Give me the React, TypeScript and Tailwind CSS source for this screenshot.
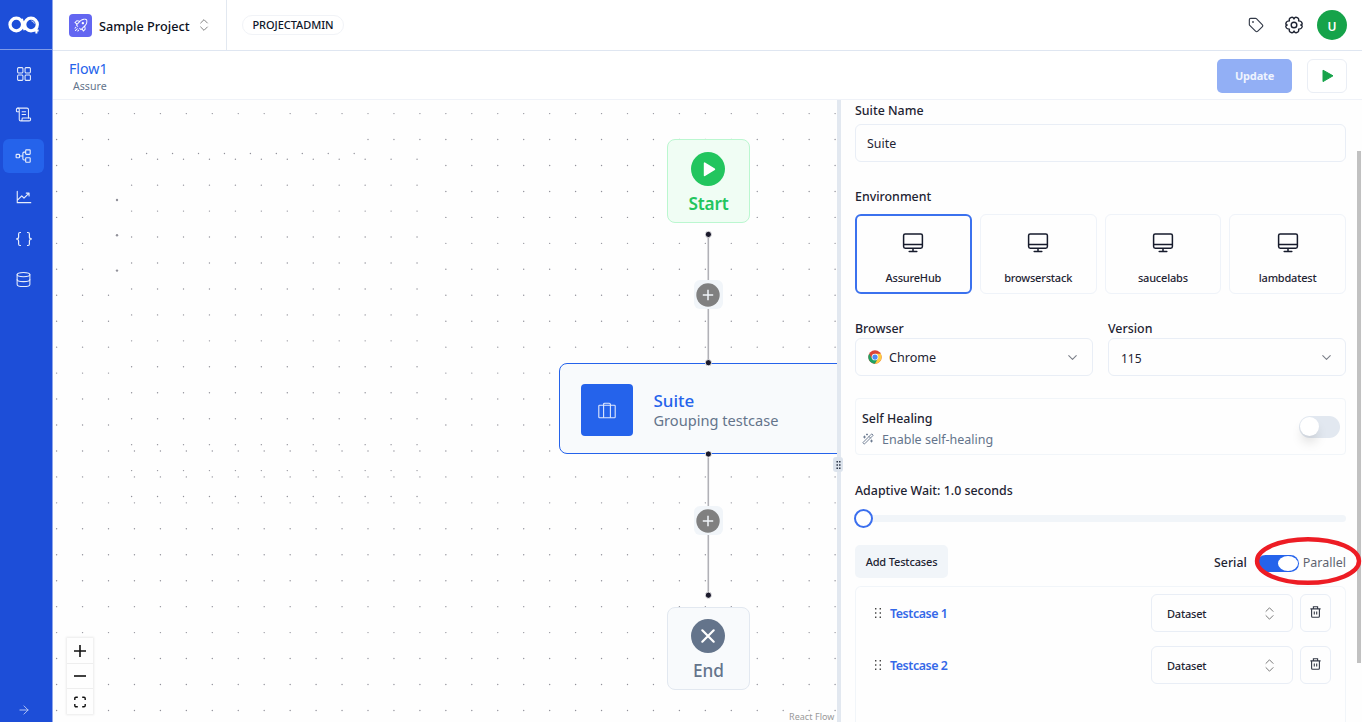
import React from "react";
import { ScrollText, ChevronsUpDown, ChevronDown, Tag, Database, ArrowRight, WandSparkles } from "lucide-react";
import { RxDashboard, RxRocket } from "react-icons/rx";
import { PiTreeStructure, PiChartLineUp } from "react-icons/pi";

const STEP = 25.95;

function buildDots() {
  const dots: [number, number, number][] = [];
  for (let j = 0; j < 24; j++) {
    for (let i = 0; i < 31; i++) {
      const inner = i >= 3 && i <= 14 && j >= 1 && j <= 12 && !(j === 1 && i >= 12);
      const notch = i === 2 && j >= 3 && j <= 6;
      if (!inner && !notch) dots.push([3.6 + STEP * i, 13.6 + STEP * j, 0.7]);
    }
  }
  for (let j = 0; j < 14; j++) {
    for (let i = 0; i < 12; i++) dots.push([78.6 + STEP * i, 59.2 + STEP * j, 0.7]);
  }
  for (let i = 0; i < 9; i++) dots.push([93.6 + STEP * i, 53.5, 0.7]);
  dots.push([64, 100, 1.2], [64, 135.3, 1.2], [64, 170.6, 1.2]);
  return dots;
}

const DOTS = buildDots();

function NavItem({ active, children }: { active?: boolean; children: React.ReactNode }) {
  return (
    <div
      className={
        active
          ? "flex h-[34px] w-[41px] items-center justify-center rounded-md bg-[#2563eb]"
          : "flex h-[34px] w-[41px] items-center justify-center"
      }
    >
      {children}
    </div>
  );
}

function Sidebar() {
  return (
    <aside className="flex w-[53px] shrink-0 flex-col border-r border-[#8ea6ec] bg-[#1d4ed8] text-[#e6ecfb]">
      <div className="flex h-[50px] shrink-0 items-center border-b-[1.5px] border-[#7f9ae8] pl-[8px]">
        <svg width="32" height="20" viewBox="0 0 32 20" fill="none" stroke="#fff" strokeWidth="3.3">
          <circle cx="8.3" cy="9.5" r="6.3" />
          <circle cx="23" cy="9.5" r="6.3" />
          <path d="M13.4 4L17 15" strokeWidth="3" />
          <path d="M25.4 15.6H30.6M28.4 12.6V18.4" strokeWidth="2" />
          <path d="M23.4 5.8a3.6 3.6 0 0 1 3 2.8" strokeWidth="0.8" />
        </svg>
      </div>
      <nav className="flex flex-1 flex-col gap-[7.3px] pl-[3px] pt-[6.5px]">
        <NavItem><RxDashboard size={16} /></NavItem>
        <NavItem><ScrollText size={17} strokeWidth={1.5} /></NavItem>
        <NavItem active><PiTreeStructure size={18} /></NavItem>
        <NavItem><PiChartLineUp size={18} /></NavItem>
        <NavItem>
          <svg width="18" height="16" viewBox="0 0 18 16" fill="none" stroke="currentColor" strokeWidth="1.2">
            <path d="M6 1.5H5Q3.6 1.5 3.6 3V6Q3.6 8 1 8Q3.6 8 3.6 10V13Q3.6 14.5 5 14.5H6M12 1.5H13Q14.4 1.5 14.4 3V6Q14.4 8 17 8Q14.4 8 14.4 10V13Q14.4 14.5 13 14.5H12" />
          </svg>
        </NavItem>
        <NavItem><Database size={17} strokeWidth={1.5} /></NavItem>
      </nav>
      <div className="flex h-6 items-center pl-[17px] text-[#b9c9f5]"><ArrowRight size={14} strokeWidth={1.6} /></div>
    </aside>
  );
}

function GearIcon() {
  return (
    <svg width="18" height="18" viewBox="0 0 18 18" fill="none" stroke="#1f2433" strokeWidth="1.4" strokeLinejoin="round">
      <path d="M9 2.9C9.6 1.6 10.6 1 11.6 1.4L13 2.2C13.9 2.8 13.9 3.7 13.6 4.9C14.8 5 16 5.1 16.5 6L17.1 7.4C17.4 8.4 16.6 8.8 15.8 9C16.6 9.3 17.4 9.7 17.1 10.7L16.5 12C16 12.9 14.8 13 13.6 13.1C13.9 14.3 13.9 15.2 13 15.8L11.6 16.6C10.6 17 9.6 16.4 9 15.1C8.4 16.4 7.4 17 6.4 16.6L5 15.8C4.1 15.2 4.1 14.3 4.4 13.1C3.2 13 2 12.9 1.5 12L0.9 10.7C0.6 9.7 1.4 9.3 2.2 9C1.4 8.8 0.6 8.4 0.9 7.4L1.5 6C2 5.1 3.2 5 4.4 4.9C4.1 3.7 4.1 2.8 5 2.2L6.4 1.4C7.4 1 8.4 1.6 9 2.9Z" />
      <circle cx="9" cy="9" r="2.8" />
    </svg>
  );
}

function TopBar() {
  return (
    <header className="flex h-[51px] shrink-0 items-center border-b border-[#dfe6f1] bg-white pr-[15px]">
      <div className="flex h-[50px] w-[174px] shrink-0 items-center border-r border-[#e2e8f0] pl-4">
        <div className="flex size-[23px] items-center justify-center rounded bg-[#6366f1] text-white"><RxRocket size={14} /></div>
        <span className="ml-[7px] mt-[3px] w-[90px] whitespace-nowrap text-[12.7px] font-medium text-[#0b1020]">Sample Project</span>
        <ChevronsUpDown size={16} strokeWidth={1.4} className="ml-[7px] text-[#777]" />
      </div>
      <span className="ml-[15px] flex h-[20px] w-[102px] items-center justify-center rounded-full border border-[#f1f3f7] text-[11px] font-medium tracking-[-0.05px] text-[#0f172a]">PROJECTADMIN</span>
      <div className="ml-auto flex items-center">
        <Tag size={16} strokeWidth={1.7} className="mr-[21px] text-[#333a48]" />
        <span className="mr-[14px]"><GearIcon /></span>
        <span className="flex size-[30px] items-center justify-center rounded-full bg-[#16a34a] pt-[3px] text-[12px] font-semibold text-white">U</span>
      </div>
    </header>
  );
}

function SubHeader() {
  return (
    <div className="flex h-[49px] shrink-0 items-center border-b border-[#eff2f8] bg-white pl-4 pr-[15px]">
      <div className="mt-[2px] flex flex-col">
        <span className="text-[14.2px] leading-[20px] text-[#2563eb]">Flow1</span>
        <span className="ml-1 text-[10.6px] leading-[15px] text-[#64748b]">Assure</span>
      </div>
      <button className="ml-auto mt-px h-[34px] w-[75px] rounded-[5px] bg-[#92aff5] pt-px text-[11px] font-bold tracking-[-0.15px] text-[#eef3fe]">Update</button>
      <button className="ml-[15px] mt-px flex h-[34px] w-[40px] items-center justify-center rounded-md border border-[#eaeef5] pl-px">
        <svg width="12" height="14" viewBox="0 0 12 14"><path d="M1 1.2L11 6.8L1 12.6Z" fill="#16a34a" stroke="#16a34a" strokeLinejoin="round" /></svg>
      </button>
    </div>
  );
}

function PlusNode({ className }: { className: string }) {
  return (
    <div className={className}>
      <svg width="24" height="24" viewBox="0 0 24 24">
        <circle cx="12" cy="12" r="11.7" fill="#808080" />
        <path d="M6.8 12H17.2M12 6.8V17.2" stroke="#f1f5f9" strokeWidth="1.5" />
      </svg>
    </div>
  );
}

function Canvas() {
  return (
    <main className="relative w-[784px] shrink-0 overflow-hidden bg-[#fefefe]">
      <svg className="absolute left-0 top-0" width="784" height="622">
        {DOTS.map(([x, y, r], k) => (
          <circle key={k} cx={x} cy={y} r={r} fill="#91919a" />
        ))}
        <g stroke="#b1b1b7" strokeWidth="1.6">
          <path d="M655.3 134V263M655.3 354V495" />
        </g>
      </svg>

      <div className="absolute left-[614px] top-[39px] flex h-[84px] w-[83px] flex-col items-center rounded-lg border border-[#bbf7d0] bg-[#f0fdf4] pt-[12px]">
        <svg width="35" height="34" viewBox="0 0 35 34">
          <circle cx="17" cy="17" r="17" fill="#22c55e" />
          <path d="M13.6 11.2V23.4L23.4 17.3Z" fill="#fff" stroke="#fff" strokeWidth="1.6" strokeLinejoin="round" />
        </svg>
        <span className="mt-[5px] text-[17.2px] font-semibold leading-[26px] tracking-[-0.2px] text-[#22c55e]">Start</span>
      </div>

      <PlusNode className="absolute left-[640.5px] top-[180px] flex h-[29px] w-[29px] items-center justify-center rounded-md bg-[#f1f5f9]" />

      <div className="absolute left-[506px] top-[262.5px] flex h-[91.5px] w-[300px] items-center rounded-lg border border-[#2563eb] bg-[#f8fafc] pl-[21px]">
        <div className="mt-1 flex size-[52px] items-center justify-center rounded bg-[#2563eb]">
          <svg width="18" height="17" viewBox="0 0 18 17" fill="none" stroke="#dfe8fd" strokeWidth="1.1">
            <rect x="0.8" y="3.2" width="16.4" height="12.6" rx="0.8" />
            <path d="M5.6 15.8V2.4Q5.6 1.2 6.8 1.2H11.2Q12.4 1.2 12.4 2.4V15.8" />
          </svg>
        </div>
        <div className="ml-[20.5px] mt-[5px] flex flex-col whitespace-nowrap">
          <span className="text-[17px] font-medium leading-[20px] text-[#2563eb]">Suite</span>
          <span className="text-[14.6px] leading-[19px] text-[#64748b]">Grouping testcase</span>
        </div>
      </div>

      <PlusNode className="absolute left-[640.5px] top-[406px] flex h-[29px] w-[29px] items-center justify-center rounded-md bg-[#f1f5f9]" />

      <div className="absolute left-[614px] top-[506.5px] flex h-[83px] w-[83px] flex-col items-center rounded-lg border border-[#e2e8f0] bg-[#f8fafc] pt-[11px]">
        <svg width="35" height="34" viewBox="0 0 35 34">
          <circle cx="17" cy="17" r="17" fill="#64748b" />
          <path d="M11.3 11.3L22.7 22.7M22.7 11.3L11.3 22.7" stroke="#fff" strokeWidth="2.2" strokeLinecap="round" />
        </svg>
        <span className="mt-[5px] text-[17.2px] font-medium leading-[26px] text-[#64748b]">End</span>
      </div>

      <svg className="absolute left-[650px] top-0" width="12" height="622" fill="#1a192b" stroke="#fff" strokeWidth="0.8">
        <circle cx="5.4" cy="134.4" r="3.1" />
        <circle cx="5.4" cy="262.7" r="3.1" />
        <circle cx="5.4" cy="354" r="3.1" />
        <circle cx="5.4" cy="495.2" r="3.1" />
      </svg>

      <div className="absolute left-[14px] top-[538px] flex w-[26px] flex-col divide-y divide-[#eee] bg-[#fefefe] pt-px shadow-[0_0_2px_1px_rgba(0,0,0,0.08)]">
        <div className="flex h-[25px] items-center justify-center"><svg width="12" height="12"><path d="M0 6H12M6 0V12" stroke="#111" strokeWidth="1.6" /></svg></div>
        <div className="flex h-[25px] items-center justify-center"><svg width="12" height="12"><path d="M0 6H12" stroke="#111" strokeWidth="1.6" /></svg></div>
        <div className="flex h-[25px] items-center justify-center"><svg width="12" height="12" fill="none"><path d="M0.8 4V2.4Q0.8 1.2 2 1.2H3.8M8.2 1.2H10Q11.2 1.2 11.2 2.4V4M11.2 8V9.6Q11.2 10.8 10 10.8H8.2M3.8 10.8H2Q0.8 10.8 0.8 9.6V8" stroke="#111" strokeWidth="1.4" /></svg></div>
      </div>

      <span className="absolute left-[736px] top-[612px] whitespace-nowrap text-[9px] leading-[10px] tracking-[0.05px] text-[#999]">React Flow</span>
    </main>
  );
}

function Label({ children }: { children: React.ReactNode }) {
  return <div className="h-[22px] text-[12.4px] font-medium leading-[22px] text-[#1e2433]">{children}</div>;
}

function DesktopIcon() {
  return (
    <svg width="22" height="20" viewBox="0 0 22 20" fill="none" stroke="#161b2c" strokeWidth="1.5">
      <rect x="1.6" y="1" width="18.8" height="14.2" rx="1.6" />
      <path d="M1.6 11.5H20.4M11 15.2V18.4" />
      <path d="M7.2 18.5H14.8" strokeLinecap="round" />
    </svg>
  );
}

function TrashIcon() {
  return (
    <svg width="11" height="12" viewBox="0 0 11 12" fill="none" stroke="#333946" strokeWidth="1.1">
      <path d="M0.4 2.9H10.6M3.4 2.9V0.8H7.6V2.9M1.6 2.9V10.2Q1.6 11.2 2.6 11.2H8.4Q9.4 11.2 9.4 10.2V2.9M4.3 5.4V8.6M6.7 5.4V8.6" />
    </svg>
  );
}

function TestcaseRow({ name }: { name: string }) {
  return (
    <div className="flex h-[38px] items-center">
      <svg width="6" height="12" fill="#444" className="ml-[19px]">
        <path d="M0 1h1.4v1.4H0zM4.6 1H6v1.4H4.6zM0 5.3h1.4v1.4H0zM4.6 5.3H6v1.4H4.6zM0 9.6h1.4V11H0zM4.6 9.6H6V11H4.6z" />
      </svg>
      <span className="ml-[9px] pt-[2px] text-[12.4px] font-semibold tracking-[-0.42px] text-[#3468e8]">{name}</span>
      <div className="ml-auto flex h-[38px] w-[142px] items-center justify-between rounded-md border border-[#e9eef6] pl-[15px] pr-[14px] text-[11px] text-[#1e2433]">
        <span className="pt-[2px] font-medium tracking-[-0.2px]">Dataset</span>
        <ChevronsUpDown size={17} strokeWidth={1.4} className="text-[#777]" />
      </div>
      <div className="ml-[7px] mr-[14px] flex h-[38px] w-[31px] items-center justify-center rounded-md border border-[#e9eef6] pb-[3px]">
        <TrashIcon />
      </div>
    </div>
  );
}

const ENVIRONMENTS = ["AssureHub", "browserstack", "saucelabs", "lambdatest"];

function Panel() {
  return (
    <section className="relative flex flex-1 flex-col overflow-hidden bg-[#fefefe] pl-[14px] pr-[16px]">
      <Label>Suite Name</Label>
      <div className="mt-[2px] flex h-[38px] shrink-0 items-center rounded-md border border-[#e9eef6] pl-[11px] pt-[2px] text-[12.4px] text-[#1e2433]">Suite</div>

      <div className="mt-[24px]"><Label>Environment</Label></div>
      <div className="mt-[6px] grid grid-cols-4 gap-[8px]">
        {ENVIRONMENTS.map((name, i) => (
          <div
            key={name}
            className={
              i === 0
                ? "flex h-[80px] flex-col items-center rounded-md border-2 border-[#3b71ee] pt-[17px] text-[#1e2433]"
                : "flex h-[80px] flex-col items-center rounded-md border border-[#eff3f9] pt-[18px] text-[#1e2433]"
            }
          >
            <DesktopIcon />
            <span className="mt-[17px] text-[11px] font-medium leading-[16px] tracking-[-0.2px]">{name}</span>
          </div>
        ))}
      </div>

      <div className="mt-[24px] grid grid-cols-2 gap-[15px]">
        <div>
          <Label>Browser</Label>
          <div className="-mt-[2px] flex h-[38px] items-center rounded-md border border-[#e9eef6] pl-[12px] pr-[12px] text-[12.6px] text-[#1e2433]">
            <svg width="14" height="14" viewBox="0 0 48 48">
              <circle cx="24" cy="24" r="23" fill="#dc4437" />
              <path d="M4.1 12.5A23 23 0 0 0 24 47L34 29.7L24 24L14 29.7Z" fill="#1da362" />
              <path d="M24 47A23 23 0 0 0 43.9 13H24V24L34 29.7Z" fill="#ffcd41" />
              <circle cx="24" cy="24" r="11.5" fill="#fff" />
              <circle cx="24" cy="24" r="9" fill="#4c8bf5" />
            </svg>
            <span className="ml-[7px] mr-auto pt-[3px]">Chrome</span>
            <ChevronDown size={15} strokeWidth={1.7} className="text-[#7b7f88]" />
          </div>
        </div>
        <div>
          <Label>Version</Label>
          <div className="-mt-[2px] flex h-[38px] items-center rounded-md border border-[#e9eef6] pl-[12px] pr-[11px] text-[12px] text-[#1e2433]">
            <span className="mr-auto pt-[3px]">115</span>
            <ChevronDown size={15} strokeWidth={1.7} className="text-[#7b7f88]" />
          </div>
        </div>
      </div>

      <div className="mt-[22px] flex h-[57px] shrink-0 items-center justify-between rounded border border-[#f1f5f9] pl-[6px] pr-[5px]">
        <div className="flex flex-col pt-[5px]">
          <span className="text-[12.4px] font-medium leading-[20px] text-[#1e2433]">Self Healing</span>
          <span className="flex items-center gap-2 text-[12.5px] leading-[21px] text-[#64748b]">
            <WandSparkles size={12} strokeWidth={1.8} />
            Enable self-healing
          </span>
        </div>
        <div className="flex h-[22px] w-[41px] items-center rounded-full bg-[#e2e8f0] p-px">
          <div className="size-[19px] rounded-full bg-white shadow-[0_8px_12px_-2px_rgba(0,0,0,0.15)]" />
        </div>
      </div>

      <div className="mt-[25px]"><Label>Adaptive Wait: 1.0 seconds</Label></div>
      <div className="mt-[6px] flex h-[20px] shrink-0 items-center">
        <div className="-ml-px size-[19px] shrink-0 rounded-full border-2 border-[#3b6fee] bg-white" />
        <div className="h-[7px] flex-1 rounded-r-full bg-[#f1f5f9]" />
      </div>

      <div className="mt-[17px] flex h-[33px] shrink-0 items-center">
        <div className="flex h-[33px] w-[93px] items-center justify-center rounded-[5px] bg-[#f1f5f9] pt-px text-[11px] font-medium tracking-[-0.15px] text-[#1e2433]">Add Testcases</div>
        <span className="ml-auto pt-[3px] text-[12.3px] font-medium text-[#1e2433]">Serial</span>
        <div className="ml-[10px] mt-[3px] flex h-[17px] w-[42px] items-center justify-end rounded-full bg-[#2563eb] p-px">
          <div className="h-[15px] w-[20px] rounded-[50%] bg-white" />
        </div>
        <span className="ml-[4px] pt-[3px] text-[12.5px] text-[#5f6470]">Parallel</span>
      </div>

      <div className="mt-[8px] flex flex-1 flex-col gap-[14px] rounded-t-md border border-b-0 border-[#f1f5f9] pt-[7px]">
        <TestcaseRow name="Testcase 1" />
        <TestcaseRow name="Testcase 2" />
      </div>

      <div className="absolute right-[1px] top-[51px] h-[512px] w-[4px] bg-[#c1c1c1]" />
      <svg className="absolute right-0 top-[434px]" width="110" height="54" fill="none">
        <ellipse cx="56" cy="27" rx="51" ry="21.8" stroke="#ed1c24" strokeWidth="4.4" />
      </svg>
    </section>
  );
}

export default function App() {
  return (
    <div className="flex h-[722px] w-[1362px] overflow-hidden bg-white font-['Noto_Sans',sans-serif]">
      <Sidebar />
      <div className="flex min-w-0 flex-1 flex-col">
        <TopBar />
        <SubHeader />
        <div className="flex min-h-0 flex-1">
          <Canvas />
          <div className="relative w-[4px] shrink-0 bg-[#e2e8f0]">
            <div className="absolute left-[-4px] top-[357px] z-10 flex h-[15px] w-[10px] items-center justify-center rounded-[3px] bg-[#dde4ed]">
              <svg width="5" height="8" fill="#1e293b"><path d="M0.5 0h1.4v1.6H0.5zM3.1 0h1.4v1.6H3.1zM0.5 3.2h1.4v1.6H0.5zM3.1 3.2h1.4v1.6H3.1zM0.5 6.4h1.4V8H0.5zM3.1 6.4h1.4V8H3.1z" /></svg>
            </div>
          </div>
          <Panel />
        </div>
      </div>
    </div>
  );
}
